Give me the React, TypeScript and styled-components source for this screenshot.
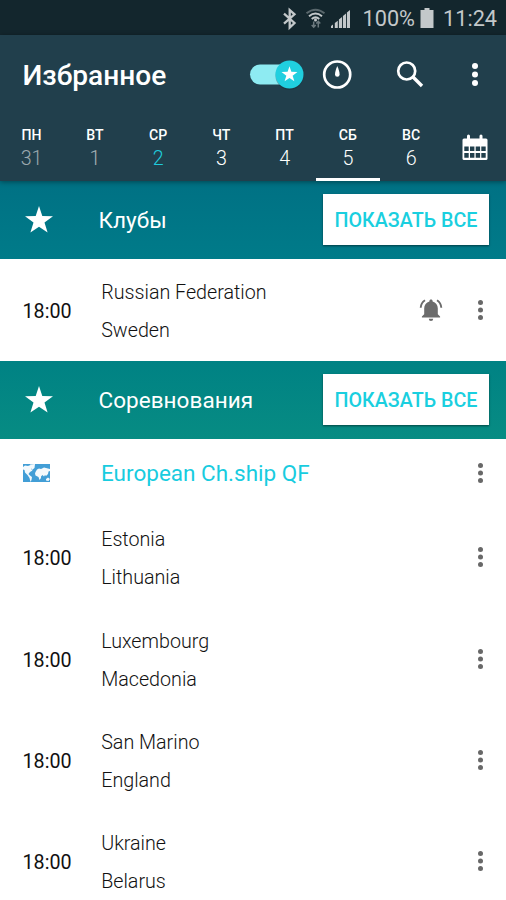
import React from "react";
import styled, { createGlobalStyle } from "styled-components";

const GlobalStyle = createGlobalStyle`
  * { box-sizing: border-box; }
  body { margin: 0; background: #fff; }
`;

const Screen = styled.main`
  width: 506px;
  height: 900px;
  overflow: hidden;
  background: #fff;
  color: #111;
  font-family: Roboto, "Noto Sans", sans-serif;
  display: flex;
  flex-direction: column;
`;

const StatusBar = styled.div`
  flex: none;
  height: 35px;
  background: #13262d;
  color: #c3c8ca;
  display: flex;
  justify-content: flex-end;
  align-items: center;
  padding: 2px 10px 0 0;
  font-size: 21.7px;
  line-height: 26px;
`;

const StatusIcons = styled.svg`
  width: 76px;
  height: 26px;
  margin-right: 5px;
  flex: none;
`;

const StatusText = styled.span<{ $width: number }>`
  width: ${(p) => p.$width}px;
  white-space: nowrap;
  text-align: right;
`;

const BatteryIcon = styled.svg`
  width: 14px;
  height: 21px;
  margin: 0 9px 0 5px;
`;

const Header = styled.header`
  flex: none;
  height: 146px;
  background: #213f4c;
  color: #fff;
  position: relative;
  box-shadow: 0 1px 5px rgba(0, 0, 0, 0.4);
`;

const Toolbar = styled.div`
  height: 79px;
  display: flex;
  align-items: center;
  padding: 0 17px 0 22.5px;
`;

const Title = styled.h1`
  margin: 3px 0 0;
  width: 227px;
  font-size: 28.1px;
  line-height: 34px;
  font-weight: 500;
`;

const ToolbarIcon = styled.svg<{ $width: number; $gap: number }>`
  width: ${(p) => p.$width}px;
  height: 36px;
  margin-right: ${(p) => p.$gap}px;
  flex: none;
  overflow: visible;
`;

const Days = styled.nav`
  height: 67px;
  display: grid;
  grid-template-columns: repeat(8, 1fr);
`;

const Day = styled.div<{ $active?: boolean }>`
  display: flex;
  flex-direction: column;
  align-items: center;
  padding-top: 12px;
  border-bottom: 3px solid ${(p) => (p.$active ? "#fff" : "transparent")};
`;

const DayName = styled.span`
  font-size: 14.1px;
  line-height: 18px;
  font-weight: 500;
`;

const DayNumber = styled.span<{ $color: string }>`
  font-size: 19.7px;
  line-height: 24px;
  margin-top: 3px;
  font-weight: 300;
  color: ${(p) => p.$color};
`;

const CalendarCell = styled.div`
  display: flex;
  justify-content: center;
  padding: 20px 0 0 1px;
`;

const SectionBar = styled.section<{ $from: string; $to: string }>`
  flex: none;
  height: 78.25px;
  display: flex;
  align-items: center;
  padding: 0 17px 0 25px;
  color: #fff;
  background: linear-gradient(${(p) => p.$from}, ${(p) => p.$to});
`;

const StarIcon = styled.svg`
  width: 28px;
  height: 27px;
  margin: 0 45.5px 0.4px 0;
`;

const SectionTitle = styled.h2`
  margin: 0;
  flex: 1;
  font-size: 22.5px;
  line-height: 28px;
  font-weight: 400;
  letter-spacing: 0.04px;
`;

const ShowAll = styled.button`
  width: 166px;
  height: 51px;
  padding: 3px 0 0;
  margin: 0 0 0.6px;
  border: 0;
  background: #fff;
  color: #1acfdf;
  font: 500 19.7px/24px Roboto, sans-serif;
  white-space: nowrap;
  box-shadow: 0 1px 2px rgba(0, 0, 0, 0.5);
`;

const Row = styled.article<{ $height: number }>`
  flex: none;
  height: ${(p) => p.$height}px;
  display: flex;
  align-items: center;
  padding: 0 20px 0 22.5px;
`;

const Time = styled.time`
  width: 78.7px;
  font-size: 19.7px;
  line-height: 24px;
  padding-top: 4px;
`;

const Teams = styled.div`
  flex: 1;
  font-size: 19.7px;
  line-height: 38px;
  font-weight: 300;
  padding-top: 4px;
`;

const CompetitionFlag = styled.svg`
  width: 27px;
  height: 18px;
  margin: 0 51.5px 0 0;
`;

const CompetitionName = styled.h3`
  flex: 1;
  margin: 0;
  font-size: 22.5px;
  line-height: 28px;
  font-weight: 400;
  color: #18ccdf;
`;

const MoreIcon = styled.svg`
  width: 11px;
  height: 22px;
`;

const BellIcon = styled.svg`
  width: 24px;
  height: 24px;
  margin: 0 32px 0 0;
`;

const STAR = "M14 0L17.3 9.9L28 10.2L19.5 16.6L22.6 26.6L14 20.7L5.4 26.6L8.5 16.6L0 10.2L10.7 9.9Z";

const DAYS = [
  { name: "ПН", number: 31, color: "#9aa8ae" },
  { name: "ВТ", number: 1, color: "#a5b1b6" },
  { name: "СР", number: 2, color: "#1fcbdc" },
  { name: "ЧТ", number: 3, color: "#fff" },
  { name: "ПТ", number: 4, color: "#fff" },
  { name: "СБ", number: 5, color: "#fff", active: true },
  { name: "ВС", number: 6, color: "#fff" },
];

const MATCHES = [
  ["Estonia", "Lithuania"],
  ["Luxembourg", "Macedonia"],
  ["San Marino", "England"],
  ["Ukraine", "Belarus"],
];

function Star() {
  return (
    <StarIcon viewBox="0 0 28 27">
      <path d={STAR} fill="#fff" />
    </StarIcon>
  );
}

function More() {
  return (
    <MoreIcon viewBox="0 0 11 22" fill="#686868">
      <circle cx="5.5" cy="3.4" r="2.5" />
      <circle cx="5.5" cy="11" r="2.5" />
      <circle cx="5.5" cy="18.6" r="2.5" />
    </MoreIcon>
  );
}

function Match({ teams, alert }: { teams: string[]; alert?: boolean }) {
  return (
    <Row $height={101.25}>
      <Time>18:00</Time>
      <Teams>
        {teams.map((team) => (
          <div key={team}>{team}</div>
        ))}
      </Teams>
      {alert && (
        <BellIcon viewBox="0 0 24 24" fill="#6b6b6b">
          <path d="M12 1.5c-1 0-1.6.7-1.6 1.5v.5C7.2 4.3 5.2 7 5.2 10.3V16.3L2.9 18.6V19.6H21.1V18.6L18.8 16.3V10.3C18.8 7 16.8 4.3 13.6 3.5V3C13.6 2.2 13 1.5 12 1.5Z" />
          <path d="M9.8 20.7h4.4a2.2 2.2 0 0 1-4.4 0Z" />
          <path d="M6 2.3C3.4 4 1.9 6.6 1.7 9.7M18 2.3C20.6 4 22.1 6.6 22.3 9.7" fill="none" stroke="#6b6b6b" strokeWidth="1.9" />
        </BellIcon>
      )}
      <More />
    </Row>
  );
}

export default function App() {
  return (
    <>
      <GlobalStyle />
      <Screen>
        <StatusBar>
          <StatusIcons viewBox="280 5.5 76 26">
            <path d="M284 13.2L294.5 22.5L289.7 27V9.5L294.5 13.8L284 23.2" fill="none" stroke="#c3c8ca" strokeWidth="2.3" />
            <g fill="none" strokeWidth="2">
              <path d="M306.5 12.8Q315.5 5.6 324.5 12.8" stroke="#59676c" />
              <path d="M309 15.7Q315.5 10.3 322 15.7M311.7 18.4Q315.5 15.3 319.3 18.4" stroke="#c3c8ca" />
              <path d="M313.7 21v5.5m-2-2l2 2.2l2-2.2M318.3 27v-6m-2 2l2-2.2l2 2.2" stroke="#6b797e" strokeWidth="1.5" />
            </g>
            <circle cx="315.5" cy="19.6" r="1.5" fill="#c3c8ca" />
            <path d="M331 27.5v-2l2-1.5V27.5zM334.8 27.5v-5l3-2.2V27.5zM338.9 27.5v-8.5l3.1-2.5V27.5zM342.9 27.5V15.5l3.1-2.5V27.5zM346.9 27.5V12l3.1-2.5V27.5z" fill="#c3c8ca" />
          </StatusIcons>
          <StatusText $width={54}>100%</StatusText>
          <BatteryIcon viewBox="0 0 14 21">
            <path d="M4.5 0h5v2H13.5v18H.5V2h4z" fill="#c3c8ca" />
          </BatteryIcon>
          <StatusText $width={53}>11:24</StatusText>
        </StatusBar>
        <Header>
          <Toolbar>
            <Title>Избранное</Title>
            <ToolbarIcon $width={54} $gap={19} viewBox="250 57 54 36">
              <rect x="250" y="64.5" width="42" height="20" rx="10" fill="#8eebf2" />
              <circle cx="289.5" cy="75.8" r="14" fill="#10252e" opacity=".35" />
              <circle cx="289.5" cy="74.5" r="14" fill="#20cfdf" />
              <path transform="translate(281.5 66.2) scale(.57)" d={STAR} fill="#fff" />
            </ToolbarIcon>
            <ToolbarIcon $width={30} $gap={44} viewBox="323 57 30 36">
              <circle cx="337.2" cy="74.5" r="13" fill="none" stroke="#fff" strokeWidth="2.7" />
              <path d="M337.3 66C336 69 335 72 335 74.5a2.3 2.3 0 0 0 4.6 0C339.6 72 338.6 69 337.3 66Z" fill="#fff" />
            </ToolbarIcon>
            <ToolbarIcon $width={28} $gap={43} viewBox="397 57 28 36">
              <circle cx="406.7" cy="71" r="8.5" fill="none" stroke="#fff" strokeWidth="2.7" />
              <path d="M412.5 76.5L422 86" stroke="#fff" strokeWidth="3.3" />
            </ToolbarIcon>
            <ToolbarIcon $width={14} $gap={0} viewBox="468 57 14 36" fill="#fff">
              <circle cx="475" cy="66" r="3" />
              <circle cx="475" cy="74.5" r="3" />
              <circle cx="475" cy="83" r="3" />
            </ToolbarIcon>
          </Toolbar>
          <Days>
            {DAYS.map((day) => (
              <Day key={day.name} $active={day.active}>
                <DayName>{day.name}</DayName>
                <DayNumber $color={day.color}>{day.number}</DayNumber>
              </Day>
            ))}
            <CalendarCell>
              <svg width="26" height="27" viewBox="0 0 26 27">
                <path d="M6.5 2v6M19 2v6" stroke="#fff" strokeWidth="3" strokeLinecap="round" />
                <rect x=".5" y="4.5" width="25" height="21.5" rx="1.5" fill="#fff" />
                <path d="M2.3 12.5h4.4v4.5H2.3zM8 12.5h4.4v4.5H8zM13.7 12.5h4.4v4.5h-4.4zM19.3 12.5h4.4v4.5h-4.4zM2.3 19h4.4v4.8H2.3zM8 19h4.4v4.8H8zM13.7 19h4.4v4.8h-4.4zM19.3 19h4.4v4.8h-4.4z" fill="#213f4c" />
              </svg>
            </CalendarCell>
          </Days>
        </Header>
        <SectionBar $from="#007184" $to="#007b89">
          <Star />
          <SectionTitle>Клубы</SectionTitle>
          <ShowAll>ПОКАЗАТЬ ВСЕ</ShowAll>
        </SectionBar>
        <Match teams={["Russian Federation", "Sweden"]} alert />
        <SectionBar $from="#008284" $to="#078c83">
          <Star />
          <SectionTitle>Соревнования</SectionTitle>
          <ShowAll>ПОКАЗАТЬ ВСЕ</ShowAll>
        </SectionBar>
        <Row $height={68}>
          <CompetitionFlag viewBox="0 0 27 18">
            <path d="M0 0h27v18H0z" fill="#429ed6" />
            <path d="M0 3L2 1.500L5 2L7.500 1L9 3L8 5L9.500 6.500L7 8L5.500 10L7 11.500L9 13L8.500 16L7.500 18L6.500 14L4.500 11L2 8.500L1.500 6L0 5.500ZM7 .4L12 0L11.500 4L9 6ZM12.500 8L14 5.500L16 4.500L18 5L21 3.500L27 5V7L25.500 7.500L25 10L23 12L22 11L21 12.500L19.500 11L18 12.500L18 14L16.500 16L15.500 13L12.500 11.500L12 9.500ZM23 15L25 13.500L27 15L25.500 17L23 16.500Z" fill="#f4f9fc" />
          </CompetitionFlag>
          <CompetitionName>European Ch.ship QF</CompetitionName>
          <More />
        </Row>
        {MATCHES.map((teams) => (
          <Match key={teams[0]} teams={teams} />
        ))}
      </Screen>
    </>
  );
}
